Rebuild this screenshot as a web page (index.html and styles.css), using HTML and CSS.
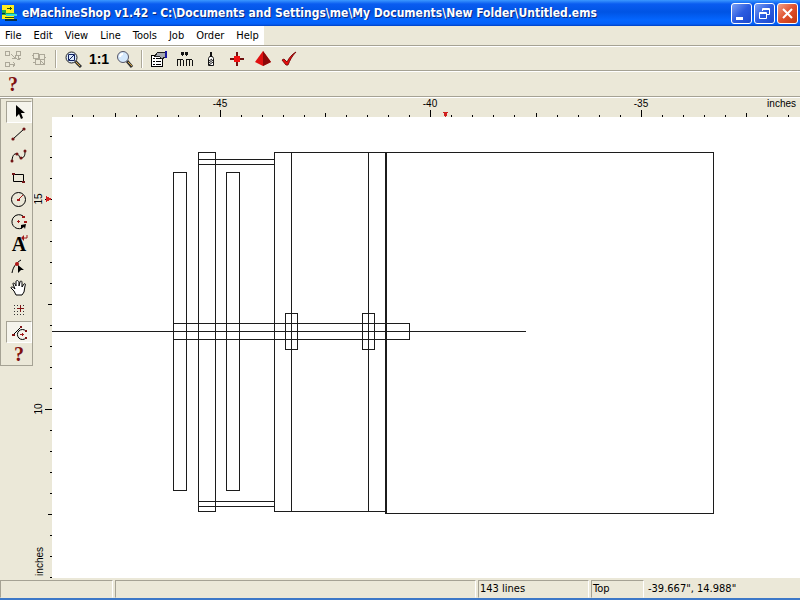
FILE: index.html
```
<!DOCTYPE html>
<html lang="en">
<head>
    <meta charset="utf-8">
    <title>eMachineShop v1.42</title>
    <link rel="stylesheet" href="styles.css">
</head>
<body>
    <header class="titlebar">
        <svg class="app-icon" width="16" height="16" viewBox="0 0 16 16" shape-rendering="crispEdges">
            <path d="M0 0h12v9H0z" fill="#ffee20"/>
            <path d="M0 5h4v3h9v2H0z" fill="#20a850"/>
            <path d="M0 10h12v4H0z" fill="#ffee20"/>
            <path d="M3 14h12v2H3zM0 8h3v1H0z" fill="#083048"/>
            <path d="M5 3.500h5M8.500 2v3M3 12.500h9" stroke="#205010" fill="none"/>
            <path d="M4 9h11v2H4z" fill="#30d8e0"/>
        </svg>
        <h1 class="title">eMachineShop v1.42 - C:\Documents and Settings\me\My Documents\New Folder\Untitled.ems</h1>
        <div class="window-buttons">
            <button class="win-btn" aria-label="Minimize"><svg width="19" height="19"><path d="M4 13h7v3H4z" fill="#fff"/></svg></button>
            <button class="win-btn" aria-label="Restore"><svg width="19" height="19" fill="none" stroke="#fff"><path d="M7.500 7V4.500h7v6H12M7 5.500h8"/><path d="M4.500 8.500h7v6h-7zM4 9.500h8"/></svg></button>
            <button class="win-btn close" aria-label="Close"><svg width="19" height="19"><path d="M5 5l9 9M14 5l-9 9" stroke="#fff" stroke-width="2"/></svg></button>
        </div>
    </header>

    <nav class="menubar">
        <button>File</button>
        <button>Edit</button>
        <button>View</button>
        <button>Line</button>
        <button>Tools</button>
        <button>Job</button>
        <button>Order</button>
        <button>Help</button>
    </nav>

    <div class="toolbar">
        <button class="tool" aria-label="Group" disabled>
            <svg width="18" height="18" fill="none" stroke="#aca899" shape-rendering="crispEdges"><path d="M1.500 1.500h4v4h-4zM12.500 1.500h4v4h-4zM1.500 12.500h4v4h-4zM7 4l4 4M11 5v3H8M14.500 6v4M12 8l2 2 3-2M6 14.500h5M9 12l2 2-2 3"/></svg>
        </button>
        <button class="tool" aria-label="Ungroup" disabled>
            <svg width="18" height="18" fill="none" stroke="#aca899" shape-rendering="crispEdges"><path d="M3.500 3.500h5v5h-5zM9.500 4.500h5v5h-5zM5.500 9.500h5v5h-5zM4 5.500H2M8 8l6 6M14 10v4h-4M14 7.500h2M5 12.500H3"/></svg>
        </button>
        <span class="separator"></span>
        <button class="tool" aria-label="Zoom to fit">
            <svg width="18" height="18"><path d="M11 11l6 6" stroke="#333" stroke-width="3"/><path d="M12 12l4 4" stroke="#dba840"/><circle cx="7.500" cy="7.500" r="5.500" fill="#dceafa" stroke="#222"/><path d="M4.500 4.500h6v6h-6zM5 10l5-5" fill="none" stroke="#102060"/></svg>
        </button>
        <button class="tool actual" aria-label="Actual size">1:1</button>
        <button class="tool" aria-label="Zoom">
            <svg width="18" height="18"><path d="M11 11l5 6" stroke="#333" stroke-width="3"/><path d="M12 12l4 4" stroke="#dba840"/><circle cx="7" cy="7" r="5.500" fill="#d4e8fc" stroke="#556"/><path d="M4 7a3 3 0 013-3" fill="none" stroke="#fff" stroke-width="2"/></svg>
        </button>
        <span class="separator"></span>
        <button class="tool" aria-label="Properties">
            <svg width="18" height="18" shape-rendering="crispEdges"><path d="M1.500 5.500h11v11h-11z" fill="#fff" stroke="#000"/><path d="M3 8.500h2M3 11.500h2M3 14.500h2M6 8.500h5M6 11.500h5M6 14.500h5" stroke="#000"/><path d="M5 6l3-4h7v5l-3 2-3-3z" fill="#a4a8b0" stroke="#222"/><path d="M15 1h2v7h-2z" fill="#1818a0"/></svg>
        </button>
        <button class="tool" aria-label="Millimeters">
            <svg width="18" height="18" fill="none" stroke="#111" shape-rendering="crispEdges"><path d="M5 2h3v3H7v1H6V5H5zM9 2h3v3h-1v1h-1V5H9z" fill="#111" stroke="none"/><path d="M1.500 16V9M1 9.500h6M4.500 9v7M7.500 10v6M10.500 16V9M10 9.500h6M13.500 9v7M16.500 10v6"/></svg>
        </button>
        <button class="tool" aria-label="Material">
            <svg width="18" height="18"><path d="M8 2h2v5H8z" fill="#111"/><path d="M6.500 8.500l1-2h3l1 2v7h-5z" fill="#fff" stroke="#111"/><path d="M7 11l3-2M7 13l4-3M7 15l4-3" stroke="#111"/></svg>
        </button>
        <button class="tool" aria-label="Center point">
            <svg width="18" height="18" shape-rendering="crispEdges"><path d="M8 2h2v14H8zM2 8h14v2H2z" fill="#701010"/><path d="M6 6h6v6H6z" fill="#f01010"/></svg>
        </button>
        <button class="tool" aria-label="3D view">
            <svg width="18" height="18"><path d="M9 1l8 11-8 4-8-4z" fill="#e01010"/><path d="M9 1l8 11-8 4z" fill="#8c0808"/></svg>
        </button>
        <button class="tool" aria-label="Check design">
            <svg width="18" height="18"><path d="M2 10l2-1 3 3c2-4 5-8 9-10-4 4-6 8-8 13H6z" fill="#e80c0c" stroke="#801010"/></svg>
        </button>
    </div>

    <div class="toolbar help-bar">
        <button class="tool question" aria-label="Help">?</button>
    </div>

    <main class="workspace">
        <aside class="toolbox">
            <button class="tool pressed" aria-label="Select">
                <svg width="18" height="18"><path d="M6 2v12l3-3 2 5 2-1-2-5h4z"/></svg>
            </button>
            <button class="tool" aria-label="Line">
                <svg width="18" height="18"><path d="M3 14L14 4" stroke="#000"/><g fill="#701414"><circle cx="3" cy="14" r="1.600"/><circle cx="14" cy="4" r="1.600"/></g></svg>
            </button>
            <button class="tool" aria-label="Curve">
                <svg width="18" height="18"><path d="M2 15c0-6 2-9 5-8s2 5 5 4 3-4 3-7" fill="none" stroke="#000"/><g fill="#701414"><circle cx="2" cy="14" r="1.500"/><circle cx="7" cy="7" r="1.500"/><circle cx="11" cy="11" r="1.500"/><circle cx="15" cy="4" r="1.500"/></g></svg>
            </button>
            <button class="tool" aria-label="Rectangle">
                <svg width="18" height="18"><path d="M3.500 5.500h10v7h-10z" fill="none" stroke="#000"/><path d="M2 4h3v2H2zM12 12h3v2h-3z" fill="#701414"/></svg>
            </button>
            <button class="tool" aria-label="Circle">
                <svg width="18" height="18"><circle cx="8.500" cy="8.500" r="7" fill="none" stroke="#000"/><path d="M8 9l5-5" stroke="#a01818"/><path d="M7 8h3v2H7z" fill="#a01818"/></svg>
            </button>
            <button class="tool" aria-label="Arc">
                <svg width="18" height="18"><path d="M13 3A7 7 0 1012 15" fill="none" stroke="#000"/><path d="M7 8.500h3M8.500 7v3" stroke="#a01818"/><path d="M12 3h3v2h-3zM14 8h3v2h-3z" fill="#a01818"/><path d="M11 12l5-1-1 5-1-2-3 2z"/></svg>
            </button>
            <button class="tool letter" aria-label="Text">
                <span>A</span>
                <svg width="7" height="7"><path d="M6 0v3H2" fill="none" stroke="#a01818"/><path d="M0 3l3-3v6z" fill="#a01818"/></svg>
            </button>
            <button class="tool" aria-label="Edit points">
                <svg width="18" height="18"><path d="M2 16c1-6 4-10 9-13" fill="none" stroke="#000"/><circle cx="7" cy="7" r="2" fill="#b01818"/><path d="M8 8l6 5h-3l-3 3z"/></svg>
            </button>
            <button class="tool" aria-label="Pan">
                <svg width="18" height="18"><path d="M6 16l-2-4-3-3c0-2 2-1 4 1L3 5c0-2 2-1 3 2L6 3c0-2 2-2 3 0v4l1-4c1-2 2-1 2 1v4l2-3c1-1 2 0 1 2l-1 6-2 3z" fill="#fff" stroke="#000"/></svg>
            </button>
            <button class="tool" aria-label="Grid">
                <svg width="18" height="18" shape-rendering="crispEdges"><path d="M4 4.500h11M4 7.500h11M4 10.500h11M4 13.500h11" stroke="#333" stroke-dasharray="1 2"/><path d="M10.500 4v7M7 7.500h7" stroke="#801414"/></svg>
            </button>
            <button class="tool pressed" aria-label="Snap">
                <svg width="18" height="18"><path d="M3 12l8-8M16 8a5 5 0 100 7" fill="none" stroke="#000"/><path d="M2 11h3v2H2zM10 3h2v2h-2zM15 7h2v2h-2zM15 14h2v2h-2z" fill="#801414"/><path d="M10 11.500h4M12.500 10v3" stroke="#a01818"/></svg>
            </button>
            <button class="tool question" aria-label="Tool help">?</button>
        </aside>

        <svg class="ruler-top" shape-rendering="crispEdges">
            <defs>
                <pattern id="ticksX" x="186" width="421" height="19" patternUnits="userSpaceOnUse">
                    <path d="M0 12h1v7H0zM210 12h1v7h-1zM105 15h1v4h-1zM316 15h1v4h-1z"/>
                    <path d="M21 17h1v2h-1zM42 17h1v2h-1zM63 17h1v2h-1zM84 17h1v2h-1zM126 17h1v2h-1zM147 17h1v2h-1zM168 17h1v2h-1zM189 17h1v2h-1zM231 17h1v2h-1zM252 17h1v2h-1zM273 17h1v2h-1zM294 17h1v2h-1zM337 17h1v2h-1zM358 17h1v2h-1zM379 17h1v2h-1zM400 17h1v2h-1z"/>
                </pattern>
            </defs>
            <rect x="18" width="100%" height="19" fill="url(#ticksX)"/>
            <text x="186" y="9" text-anchor="middle">-45</text>
            <text x="396" y="9" text-anchor="middle">-40</text>
            <text x="607" y="9" text-anchor="middle">-35</text>
            <path d="M409 14h5l-2 5h-1z" fill="#d02020"/>
        </svg>
        <span class="unit-top">inches</span>

        <svg class="ruler-left" shape-rendering="crispEdges">
            <defs>
                <pattern id="ticksY" y="82" width="18" height="210" patternUnits="userSpaceOnUse">
                    <path d="M11 0h7v1h-7zM14 105h4v1h-4z"/>
                    <path d="M16 21h2v1h-2zM16 42h2v1h-2zM16 63h2v1h-2zM16 84h2v1h-2zM16 126h2v1h-2zM16 147h2v1h-2zM16 168h2v1h-2zM16 189h2v1h-2z"/>
                </pattern>
            </defs>
            <rect width="18" height="100%" fill="url(#ticksY)"/>
            <text transform="translate(8 82) rotate(-90)" text-anchor="middle">15</text>
            <text transform="translate(8 292) rotate(-90)" text-anchor="middle">10</text>
            <path d="M12 79l6 3-6 3z" fill="#d02020"/>
        </svg>
        <span class="unit-left">inches</span>

        <svg class="canvas" shape-rendering="crispEdges">
            <g transform="translate(-52 -117)">
                <!-- shaft -->
                <path d="M52 331.500H526M173.500 323.500H409.500V339.500H173.500"/>
                <!-- discs -->
                <path d="M173.500 172.500h13v318h-13zM226.500 172.500h13v318h-13z"/>
                <!-- flange with top and bottom rods -->
                <path d="M198.500 152.500h17v359h-17zM198 159.500h76M198 164.500h76M198 501.500h76M198 506.500h76"/>
                <!-- bearing housing -->
                <path d="M274.500 152.500V511.500H386M291.500 152v359M368.500 152v359"/>
                <path d="M285.500 313.500h12v36h-12zM362.500 313.500h12v36h-12z"/>
                <!-- body -->
                <path d="M274 152.500H713.500V513.500H386"/>
                <path d="M386 152V514" class="thick"/>
            </g>
        </svg>
    </main>

    <footer class="statusbar">
        <span class="pane"></span>
        <span class="pane"></span>
        <span class="pane">143 lines</span>
        <span class="pane">Top</span>
        <span class="coords">-39.667", 14.988"</span>
    </footer>
</body>
</html>
```
FILE: styles.css
```
* {
    box-sizing: border-box;
}

body {
    display: flex;
    flex-direction: column;
    height: 100vh;
    margin: 0;
    overflow: hidden;
    background: #ebe8d8;
    color: #000;
    font-family: "DejaVu Sans Condensed", "DejaVu Sans", sans-serif;
    font-size: 11px;
}

button {
    margin: 0;
    padding: 0;
    border: none;
    background: none;
    color: inherit;
    font: inherit;
}

svg {
    display: block;
}

/* Title bar */
.titlebar {
    display: flex;
    flex: none;
    align-items: center;
    height: 26px;
    padding: 0 2px;
    background: linear-gradient(#3c98ff, #0a5cf0 4px, #0054e4 12px, #0466ff 20px, #0460f8 24px, #0040c0);
}

.title {
    flex: 1;
    margin: 0 0 0 4px;
    overflow: hidden;
    color: #fff;
    font-family: "DejaVu Sans Condensed", "DejaVu Sans", sans-serif;
    font-size: 12px;
    font-weight: bold;
    white-space: nowrap;
    text-shadow: 1px 1px #0a2880;
}

.window-buttons {
    display: flex;
    gap: 2px;
}

.win-btn {
    width: 21px;
    height: 21px;
    border: 1px solid #fff;
    border-radius: 3px;
    background: linear-gradient(135deg, #7ca0f4, #2c5ce0 50%, #1c48cc);
}

.win-btn.close {
    background: linear-gradient(135deg, #f0a088, #e0502c 50%, #c03810);
}

/* Menu */
.menubar {
    display: flex;
    flex: none;
    align-self: flex-start;
    gap: 2px;
    height: 19px;
    background: #fff;
}

.menubar button {
    padding: 0 5px;
}

/* Toolbars */
.toolbar {
    display: flex;
    flex: none;
    align-items: center;
    height: 25px;
    margin-top: 1px;
    border-top: 1px solid #fff;
    border-bottom: 1px solid #a5a294;
    box-shadow: 0 -1px #a5a294;
}

.help-bar {
    height: 26px;
    margin-top: 0;
    box-shadow: none;
}

.tool {
    display: flex;
    flex: none;
    align-items: center;
    justify-content: center;
    width: 26px;
    height: 22px;
}

.separator {
    width: 2px;
    height: 18px;
    margin: 0 3px;
    border-left: 1px solid #aca899;
    border-right: 1px solid #fff;
}

.actual {
    font-family: "Liberation Sans", sans-serif;
    font-size: 14px;
    font-weight: bold;
}

.question {
    color: #801010;
    font-family: "Liberation Serif", serif;
    font-size: 20px;
    font-weight: bold;
}

/* Drawing area */
.workspace {
    display: grid;
    flex: 1;
    grid-template-columns: 34px 18px 1fr;
    grid-template-rows: 19px 1fr;
    min-height: 0;
    border-top: 1px solid #fff;
    font-family: "Liberation Sans", sans-serif;
    font-size: 10px;
}

.toolbox {
    grid-row: 1 / 3;
    grid-column: 1;
    align-self: start;
    width: 33px;
    padding: 2px 0 0 5px;
    border: 1px solid #a5a294;
}

.pressed {
    border: 1px solid;
    border-color: #a5a294 #fff #fff #a5a294;
    background: #f5f4ec;
}

.letter {
    position: relative;
    font-family: "Liberation Serif", serif;
    font-size: 20px;
    font-weight: bold;
}

.letter svg {
    position: absolute;
    top: 2px;
    right: 4px;
}

.ruler-top {
    grid-row: 1;
    grid-column: 2 / 4;
    width: 100%;
    height: 19px;
}

.unit-top {
    grid-row: 1;
    grid-column: 3;
    justify-self: end;
    padding-right: 4px;
}

.ruler-left {
    grid-row: 2;
    grid-column: 2;
    width: 18px;
    height: 100%;
}

.unit-left {
    grid-row: 2;
    grid-column: 2;
    align-self: end;
    padding-bottom: 2px;
    writing-mode: sideways-lr;
}

.canvas {
    grid-row: 2;
    grid-column: 3;
    width: 100%;
    height: 100%;
    background: #fff;
    fill: none;
    stroke: #1c1c1c;
}

.thick {
    stroke-width: 2;
}

/* Status bar */
.statusbar {
    display: grid;
    flex: none;
    grid-template-columns: 113px 1fr 111px 53px 154px;
    gap: 2px;
    height: 22px;
    padding-top: 2px;
    border-bottom: 2px solid #3c78c8;
    line-height: 16px;
}

.pane {
    padding-left: 1px;
    border: 1px solid;
    border-color: #a5a294 #fff #ebe8d8 #a5a294;
}

.coords {
    padding: 1px 2px;
}
```
